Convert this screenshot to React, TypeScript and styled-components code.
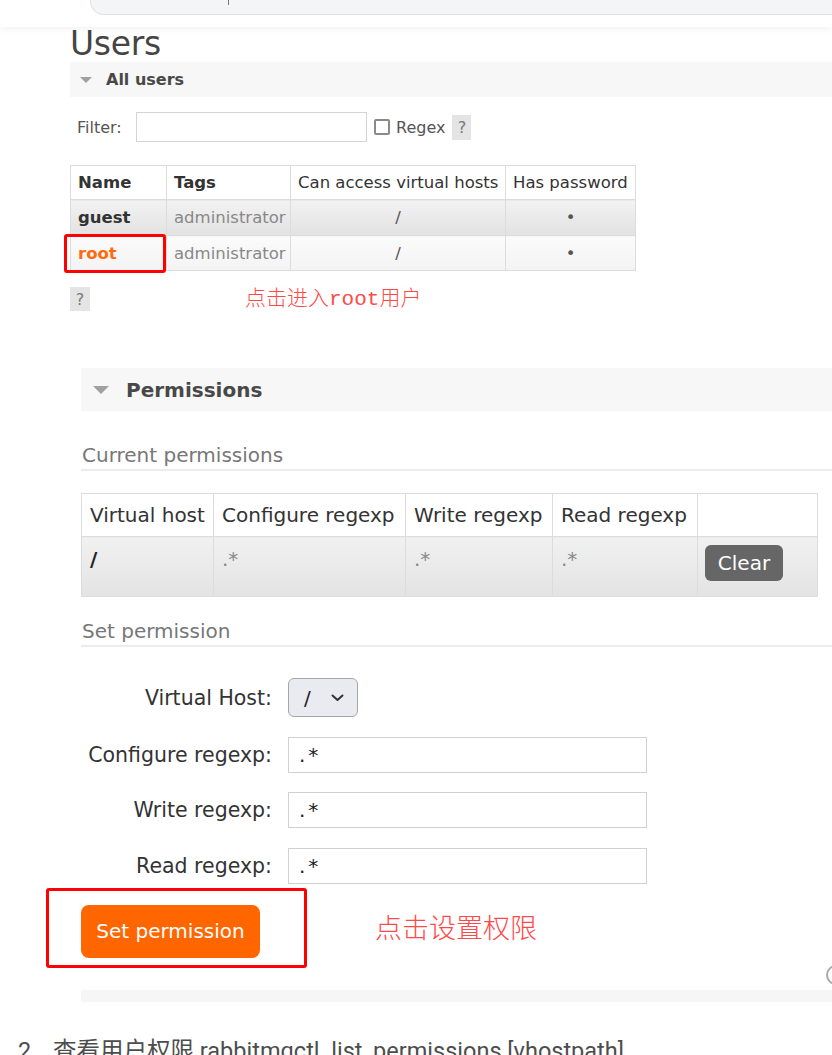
import React from "react";
import styled, { createGlobalStyle } from "styled-components";

const GlobalStyle = createGlobalStyle`
  html, body {
    margin: 0;
    padding: 0;
    background: #fff;
    overflow: hidden;
  }
  body {
    font-family: "DejaVu Sans", Verdana, sans-serif;
    color: #484848;
  }
`;

const Page = styled.div`
  height: 1055px;
  overflow: hidden;
`;

/* browser-ish search bar + site header shadow */
const TopBar = styled.header`
  position: relative;
  z-index: 1;
  height: 27px;
  background: #fff;
  box-shadow: 0 2px 6px rgba(0, 0, 0, 0.06);
`;
const SearchBox = styled.div`
  position: relative;
  margin-left: 90px;
  height: 14px;
  background: #f4f5f7;
  border: 1px solid #dfe1e5;
  border-top: none;
  border-right: none;
  border-bottom-left-radius: 14px;
`;
const Caret = styled.span`
  position: absolute;
  left: 137px;
  top: 0;
  width: 1px;
  height: 5px;
  background: #777;
`;

const UsersShot = styled.section`
  margin-left: 70px;
`;
const Title = styled.h1`
  margin: 0 0 1px;
  font-size: 33px;
  font-weight: normal;
  line-height: 34px;
  color: #454545;
  letter-spacing: -0.3px;
`;

const SectionBand = styled.div<{ $large?: boolean }>`
  display: flex;
  align-items: center;
  height: ${({ $large }) => ($large ? 43 : 35)}px;
  padding-left: ${({ $large }) => ($large ? 12 : 10)}px;
  background: #f7f7f7;
  font-weight: bold;
  font-size: ${({ $large }) => ($large ? 20 : 16)}px;
  color: #484848;
`;
const Arrow = styled.span<{ $large?: boolean }>`
  width: 0;
  height: 0;
  border-left: ${({ $large }) => ($large ? 8 : 6)}px solid transparent;
  border-right: ${({ $large }) => ($large ? 8 : 6)}px solid transparent;
  border-top: ${({ $large }) => ($large ? 8 : 6)}px solid #a0a0a0;
  margin-right: ${({ $large }) => ($large ? 17 : 14)}px;
`;

const FilterRow = styled.div`
  display: flex;
  align-items: center;
  margin-top: 15px;
  padding-left: 7px;
  font-size: 16px;
  color: #555;
`;
const FilterLabel = styled.label`
  width: 59px;
`;
const FilterInput = styled.input`
  width: 231px;
  height: 30px;
  box-sizing: border-box;
  border: 1px solid #d4d4d4;
  margin: 0;
`;
const CheckBox = styled.span`
  width: 16px;
  height: 16px;
  box-sizing: border-box;
  margin-left: 7px;
  border: 2px solid #8a8a8a;
  border-radius: 2px;
`;
const CheckLabel = styled.span`
  margin-left: 6px;
`;
const HelpBox = styled.span<{ $w: number; $h: number }>`
  display: inline-flex;
  align-items: center;
  justify-content: center;
  width: ${({ $w }) => $w}px;
  height: ${({ $h }) => $h}px;
  background: #e4e4e4;
  color: #777;
  font-size: 16px;
`;
const FilterHelp = styled(HelpBox)`
  margin-left: 7px;
`;

const TableWrap = styled.div`
  position: relative;
  margin-top: 23px;
`;
const UserTable = styled.table`
  width: 565px;
  table-layout: fixed;
  border-collapse: collapse;
  font-size: 16.5px;
  color: #333;

  th,
  td {
    border: 1px solid #dcdcdc;
    padding: 0 7px;
    text-align: left;
    white-space: nowrap;
  }
`;
const HeadCell = styled.th<{ $bold?: boolean }>`
  font-weight: ${({ $bold }) => ($bold ? "bold" : "normal")};
  background: #fff;
`;
const UserRow = styled.tr<{ $dark?: boolean }>`
  height: ${({ $dark }) => ($dark ? 36 : 35)}px;

  td {
    background: ${({ $dark }) =>
      $dark
        ? "linear-gradient(#f2f2f2, #e2e2e2)"
        : "linear-gradient(#fbfbfb, #f3f3f3)"};
  }
`;
const NameCell = styled.td<{ $accent?: boolean }>`
  font-weight: bold;
  color: ${({ $accent }) => ($accent ? "#ff6a10" : "#333")};
`;
const TagCell = styled.td`
  color: #888;
`;
const CenterCell = styled.td`
  && {
    text-align: center;
  }
  color: #555;
`;
const RootMark = styled.span`
  position: absolute;
  left: -6px;
  top: 69px;
  width: 102px;
  height: 39px;
  box-sizing: border-box;
  border: 3px solid #ff0000;
  border-radius: 3px;
`;

const HelpRow = styled.div`
  display: flex;
  align-items: center;
  margin-top: 16px;
`;
const Note = styled.span<{ $size: number; $gap: number }>`
  margin-left: ${({ $gap }) => $gap}px;
  font-family: "Liberation Mono", "Noto Sans CJK SC", monospace;
  font-size: ${({ $size }) => $size}px;
  font-weight: 300;
  color: #ff4848;
  line-height: 1;
`;

const PermShot = styled.section`
  margin: 57px 0 0 81px;
`;
const SubHeading = styled.h3<{ $gap: number }>`
  margin: ${({ $gap }) => $gap}px 0 0;
  padding: 0 0 2px 1px;
  font-size: 20px;
  font-weight: normal;
  line-height: 24px;
  color: #777;
  border-bottom: 2px solid #ececec;
`;
const PermTable = styled.table`
  margin-top: 22px;
  width: 736px;
  table-layout: fixed;
  border-collapse: collapse;
  font-size: 20px;
  color: #333;

  th,
  td {
    border: 1px solid #dcdcdc;
    padding: 0 8px;
    text-align: left;
    white-space: nowrap;
  }
  th {
    height: 42px;
    font-weight: normal;
    background: #fff;
  }
  td {
    height: 60px;
    box-sizing: border-box;
    vertical-align: top;
    padding-top: 10px;
    line-height: 24px;
    background: linear-gradient(#f1f1f1, #e3e3e3);
  }
`;
const HostCell = styled.td`
  font-weight: bold;
  color: #222;
`;
const RegexCell = styled.td`
  color: #888;
`;
const ActionCell = styled.td`
  && {
    padding: 8px 7px 0;
  }
`;
const ClearButton = styled.button`
  width: 78px;
  height: 36px;
  border: none;
  border-radius: 6px;
  background: #666;
  color: #fff;
  font: 20px "DejaVu Sans", Verdana, sans-serif;
  padding: 0;
`;

const PermForm = styled.div`
  display: grid;
  grid-template-columns: 191px auto;
  column-gap: 16px;
  row-gap: 19.5px;
  align-items: center;
  justify-content: start;
  margin-top: 31px;
`;
const FieldLabel = styled.label`
  text-align: right;
  font-size: 20.5px;
  color: #333;
`;
const SelectBox = styled.div`
  display: flex;
  align-items: center;
  justify-content: space-between;
  width: 70px;
  height: 39px;
  box-sizing: border-box;
  padding: 0 13px 0 15px;
  border: 1px solid #a6a6a6;
  border-radius: 6px;
  background: #e9ebf0;
  font-size: 20px;
  color: #222;
`;
const TextInput = styled.input`
  width: 359px;
  height: 36px;
  box-sizing: border-box;
  margin: 0;
  padding: 0 10px;
  border: 1px solid #d0d0d0;
  font: 20px "DejaVu Sans", Verdana, sans-serif;
  letter-spacing: 3px;
  color: #222;
`;

const ButtonRow = styled.div`
  position: relative;
  display: flex;
  align-items: center;
  margin-top: 21px;
`;
const SubmitButton = styled.button`
  width: 179px;
  height: 53px;
  padding: 0;
  border: none;
  border-radius: 8px;
  background: #ff6600;
  color: #fff;
  font: 20px "DejaVu Sans", Verdana, sans-serif;
`;
const ButtonMark = styled.span`
  position: absolute;
  left: -35px;
  top: -17px;
  width: 261px;
  height: 80px;
  box-sizing: border-box;
  border: 3px solid #ff0000;
  border-radius: 3px;
`;
const EdgeCircle = styled.span`
  position: absolute;
  right: -14px;
  bottom: -27px;
  width: 20px;
  height: 20px;
  box-sizing: border-box;
  border: 2px solid #aaa;
  border-radius: 50%;
`;
const BottomBand = styled.div`
  margin-top: 32px;
  height: 12px;
  background: #f6f6f6;
`;

const StepText = styled.p`
  display: flex;
  margin: 34px 0 0;
  padding-left: 18px;
  font-family: Roboto, "Noto Sans CJK SC", sans-serif;
  font-size: 23.5px;
  line-height: 30px;
  color: #4d4d4d;
  white-space: nowrap;
`;
const StepNum = styled.span`
  width: 35px;
`;

const users = [
  { name: "guest", dark: true },
  { name: "root", dark: false },
];

const fields = ["Configure regexp:", "Write regexp:", "Read regexp:"];

export default function App() {
  return (
    <Page>
      <GlobalStyle />
      <TopBar>
        <SearchBox>
          <Caret />
        </SearchBox>
      </TopBar>

      <UsersShot>
        <Title>Users</Title>
        <SectionBand>
          <Arrow />
          All users
        </SectionBand>

        <FilterRow>
          <FilterLabel>Filter:</FilterLabel>
          <FilterInput />
          <CheckBox />
          <CheckLabel>Regex</CheckLabel>
          <FilterHelp $w={19} $h={25}>?</FilterHelp>
        </FilterRow>

        <TableWrap>
          <UserTable>
            <colgroup>
              <col style={{ width: 96 }} />
              <col style={{ width: 124 }} />
              <col style={{ width: 215 }} />
              <col style={{ width: 130 }} />
            </colgroup>
            <thead>
              <tr style={{ height: 34 }}>
                <HeadCell $bold>Name</HeadCell>
                <HeadCell $bold>Tags</HeadCell>
                <HeadCell>Can access virtual hosts</HeadCell>
                <HeadCell>Has password</HeadCell>
              </tr>
            </thead>
            <tbody>
              {users.map((u) => (
                <UserRow key={u.name} $dark={u.dark}>
                  <NameCell $accent={u.name === "root"}>{u.name}</NameCell>
                  <TagCell>administrator</TagCell>
                  <CenterCell>/</CenterCell>
                  <CenterCell>•</CenterCell>
                </UserRow>
              ))}
            </tbody>
          </UserTable>
          <RootMark />
        </TableWrap>

        <HelpRow>
          <HelpBox $w={20} $h={24}>?</HelpBox>
          <Note $size={21} $gap={155}>点击进入root用户</Note>
        </HelpRow>
      </UsersShot>

      <PermShot>
        <SectionBand $large>
          <Arrow $large />
          Permissions
        </SectionBand>

        <SubHeading $gap={32}>Current permissions</SubHeading>
        <PermTable>
          <colgroup>
            <col style={{ width: 132 }} />
            <col style={{ width: 192 }} />
            <col style={{ width: 147 }} />
            <col style={{ width: 145 }} />
            <col style={{ width: 120 }} />
          </colgroup>
          <thead>
            <tr>
              <th>Virtual host</th>
              <th>Configure regexp</th>
              <th>Write regexp</th>
              <th>Read regexp</th>
              <th />
            </tr>
          </thead>
          <tbody>
            <tr>
              <HostCell>/</HostCell>
              <RegexCell>.*</RegexCell>
              <RegexCell>.*</RegexCell>
              <RegexCell>.*</RegexCell>
              <ActionCell>
                <ClearButton>Clear</ClearButton>
              </ActionCell>
            </tr>
          </tbody>
        </PermTable>

        <SubHeading $gap={22}>Set permission</SubHeading>
        <PermForm>
          <FieldLabel>Virtual Host:</FieldLabel>
          <SelectBox>
            <span>/</span>
            <svg width="13" height="8" viewBox="0 0 13 8">
              <polyline
                points="1.5,1.5 6.5,6 11.5,1.5"
                fill="none"
                stroke="#333"
                strokeWidth="2"
                strokeLinecap="round"
                strokeLinejoin="round"
              />
            </svg>
          </SelectBox>
          {fields.map((f) => (
            <React.Fragment key={f}>
              <FieldLabel>{f}</FieldLabel>
              <TextInput readOnly defaultValue=".*" />
            </React.Fragment>
          ))}
        </PermForm>

        <ButtonRow>
          <SubmitButton>Set permission</SubmitButton>
          <ButtonMark />
          <Note $size={27} $gap={115}>点击设置权限</Note>
          <EdgeCircle />
        </ButtonRow>
        <BottomBand />
      </PermShot>

      <StepText>
        <StepNum>2.</StepNum>
        <span>查看用户权限 rabbitmqctl&nbsp; list_permissions [vhostpath]</span>
      </StepText>
    </Page>
  );
}
